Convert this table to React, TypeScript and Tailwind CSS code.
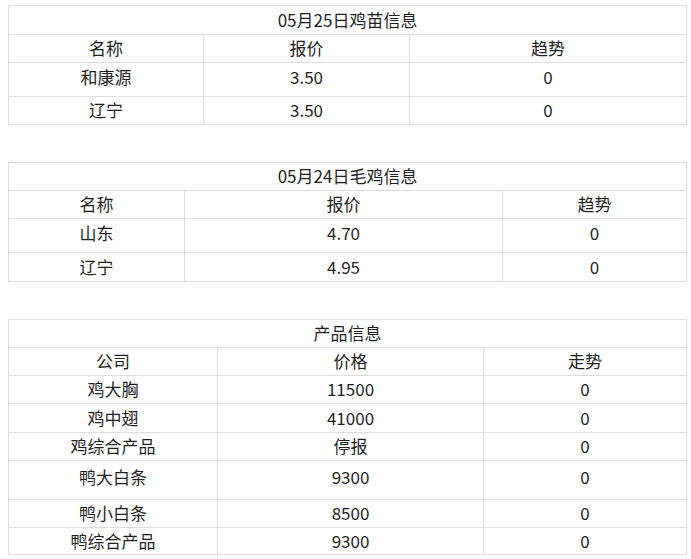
import React from 'react'

interface InfoTable {
  title: string
  headers: string[]
  cols: string[]
  rows: string[][]
  // row classes: title row, header row, then one per data row
  rowCls: string[]
}

const tables: InfoTable[] = [
  {
    title: '05月25日鸡苗信息',
    headers: ['名称', '报价', '趋势'],
    cols: ['w-[195px]', 'w-[206px]', 'w-[277px]'],
    rows: [
      ['和康源', '3.50', '0'],
      ['辽宁', '3.50', '0'],
    ],
    rowCls: ['h-[29px]', 'h-[28px]', 'h-[34px] tall', 'h-[28px]'],
  },
  {
    title: '05月24日毛鸡信息',
    headers: ['名称', '报价', '趋势'],
    cols: ['w-[176px]', 'w-[318px]', 'w-[184px]'],
    rows: [
      ['山东', '4.70', '0'],
      ['辽宁', '4.95', '0'],
    ],
    rowCls: ['h-[28px]', 'h-[28px]', 'h-[34px] tall', 'h-[29px]'],
  },
  {
    title: '产品信息',
    headers: ['公司', '价格', '走势'],
    cols: ['w-[209px]', 'w-[266px]', 'w-[203px]'],
    rows: [
      ['鸡大胸', '11500', '0'],
      ['鸡中翅', '41000', '0'],
      ['鸡综合产品', '停报', '0'],
      ['鸭大白条', '9300', '0'],
      ['鸭小白条', '8500', '0'],
      ['鸭综合产品', '9300', '0'],
    ],
    rowCls: ['h-[28px]', 'h-[28px]', 'h-[28px]', 'h-[29px]', 'h-[28px]', 'h-[39px] tall', 'h-[28px]', 'h-[27px]'],
  },
]

function Cell({ children, span, tall }: { children: React.ReactNode; span?: number; tall: boolean }) {
  return (
    <td
      colSpan={span}
      className={`border border-[#dddddd] px-0 pt-0 text-center align-middle ${tall ? 'pb-[7px]' : 'pb-[2px]'}`}
    >
      {children}
    </td>
  )
}

function PriceTable({ table }: { table: InfoTable }) {
  const isTall = (i: number) => table.rowCls[i].includes('tall')
  return (
    <table className="w-[678px] table-fixed border-collapse">
      <colgroup>
        {table.cols.map((w, i) => (
          <col key={i} className={w} />
        ))}
      </colgroup>
      <tbody>
        <tr className={table.rowCls[0]}>
          <Cell span={3} tall={isTall(0)}>
            {table.title}
          </Cell>
        </tr>
        <tr className={table.rowCls[1]}>
          {table.headers.map(h => (
            <Cell key={h} tall={isTall(1)}>
              {h}
            </Cell>
          ))}
        </tr>
        {table.rows.map((row, r) => (
          <tr key={r} className={table.rowCls[r + 2]}>
            {row.map((cell, c) => (
              <Cell key={c} tall={isTall(r + 2)}>
                {cell}
              </Cell>
            ))}
          </tr>
        ))}
      </tbody>
    </table>
  )
}

export default function App() {
  return (
    <div className="min-h-screen bg-white pt-[5px] pl-[8px] text-[17px] leading-none text-[#1f1f1f] font-['Noto_Sans_CJK_SC','Noto_Sans',sans-serif]">
      <div className="flex flex-col gap-[37px]">
        {tables.map(t => (
          <PriceTable key={t.title} table={t} />
        ))}
      </div>
    </div>
  )
}
